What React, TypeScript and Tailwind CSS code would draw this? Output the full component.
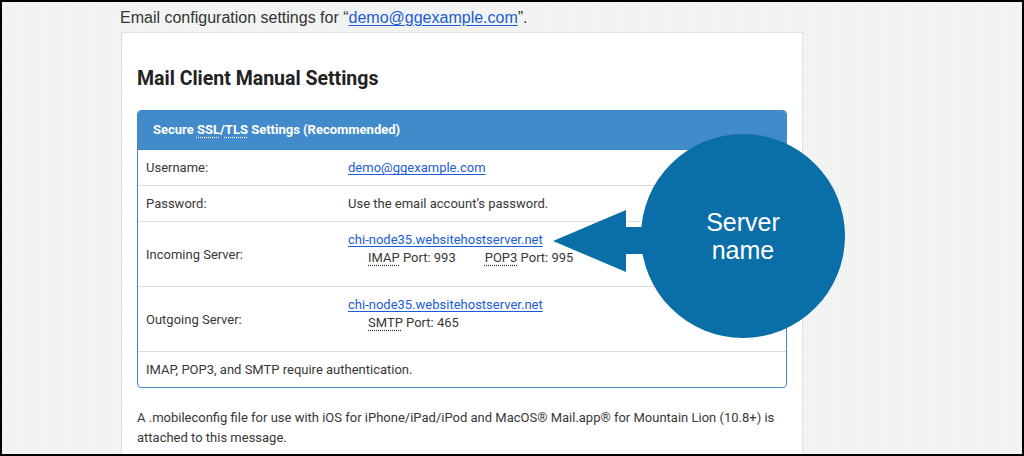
const link = "text-[#1a5dd6] underline underline-offset-[2px]";
const abbr = "underline decoration-dotted underline-offset-[3px]";

function Row({
  label,
  tall,
  last,
  children,
}: {
  label?: string;
  tall?: boolean;
  last?: boolean;
  children: React.ReactNode;
}) {
  const h = tall ? "h-[65px]" : last ? "h-[35px]" : "h-[36px]";
  const line = last ? "" : "border-b border-[#dcdcdc]";
  if (!label) {
    return <div className={`flex items-center pl-[8px] pt-[1px] ${h} ${line}`}>{children}</div>;
  }
  return (
    <div className={`grid grid-cols-[210px_1fr] ${h} ${line}`}>
      <div className="flex items-center pl-[8px] pt-[1px]">{label}</div>
      <div className={tall ? "pt-[9px] leading-[18px]" : "flex items-center pt-[1px]"}>{children}</div>
    </div>
  );
}

export default function App() {
  return (
    <div className="relative h-[456px] w-[1024px] overflow-hidden border-2 border-black bg-[#f3f4f4] bg-[radial-gradient(#e8eaea_0.6px,transparent_0.8px)] bg-[length:3px_3px]">
      <div className="pl-[118px] pt-[4px]">
        <p className="font-['Liberation_Sans',Arial,sans-serif] text-[16px] leading-[24px] text-[#333]">
          Email configuration settings for “<span className={link}>demo@ggexample.com</span>”.
        </p>

        <div className="ml-[1px] mt-[2px] h-[430px] w-[682px] border border-[#e0e0e0] bg-white px-[15px] pt-[34px] font-['Roboto',sans-serif] text-[13px] text-[#383838]">
          <h2 className="mb-[19px] text-[19.5px] font-bold leading-[24px] text-[#222]">Mail Client Manual Settings</h2>

          <div className="overflow-hidden rounded-[4px] border border-[#428bca]">
            <div className="flex h-[39px] items-center border-b border-dotted border-[#3a7fbd] bg-[#428bca] pl-[15px] font-bold text-white">
              <span>
                Secure <span className={abbr}>SSL</span>/<span className={abbr}>TLS</span> Settings (Recommended)
              </span>
              <span className="ml-[6px] mt-[8px] h-0 flex-1 border-b border-dotted border-[#3a7fbd]" />
            </div>

            <Row label="Username:">
              <span className={link}>demo@ggexample.com</span>
            </Row>
            <Row label="Password:">Use the email account’s password.</Row>
            <Row label="Incoming Server:" tall>
              <div className={link}>chi-node35.websitehostserver.net</div>
              <div className="pl-[20px]">
                <span className={abbr}>IMAP</span> Port: 993
                <span className="ml-[29px]">
                  <span className={abbr}>POP3</span> Port: 995
                </span>
              </div>
            </Row>
            <Row label="Outgoing Server:" tall>
              <div className={link}>chi-node35.websitehostserver.net</div>
              <div className="pl-[20px]">
                <span className={abbr}>SMTP</span> Port: 465
              </div>
            </Row>
            <Row last>IMAP, POP3, and SMTP require authentication.</Row>
          </div>

          <p className="mt-[20px] leading-[20px]">
            A .mobileconfig file for use with iOS for iPhone/iPad/iPod and MacOS® Mail.app® for Mountain Lion (10.8+) is attached to this message.
          </p>
        </div>
      </div>

      <svg className="absolute left-0 top-0" width="1020" height="452" viewBox="2 2 1020 452">
        <polygon points="553,241 626,210 626,227 670,227 670,254 626,254 626,272" fill="#0a6ea8" />
      </svg>
      <div className="absolute left-[639px] top-[132px] flex h-[204px] w-[204px] items-center justify-center rounded-full bg-[#0a6ea8] text-center font-['Liberation_Sans',Arial,sans-serif] text-[25px] leading-[28px] text-white">
        <span>
          Server
          <br />
          name
        </span>
      </div>
    </div>
  );
}
